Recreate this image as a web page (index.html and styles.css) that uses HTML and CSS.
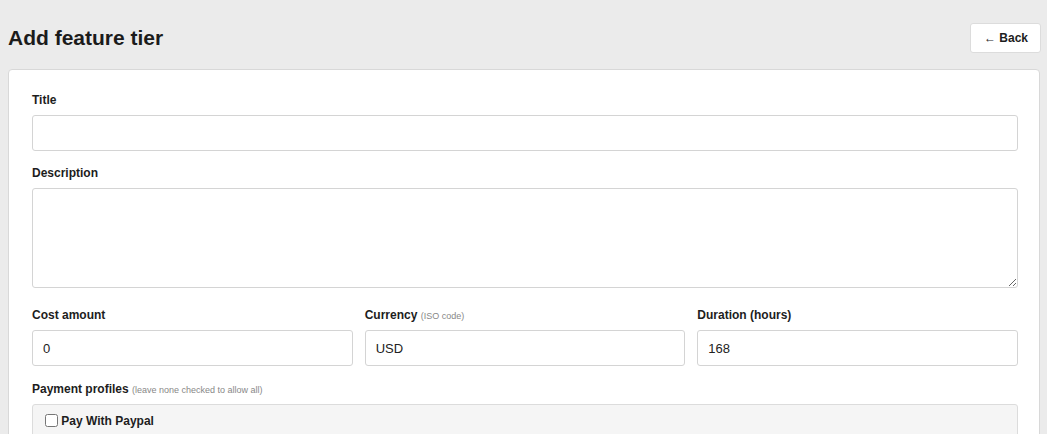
FILE: index.html
```
<!DOCTYPE html>
<html lang="en">
<head>
    <meta charset="UTF-8">
    <meta name="viewport" content="width=device-width, initial-scale=1.0">
    <title>Add feature tier</title>
    <link rel="stylesheet" href="styles.css">
</head>
<body>
    <div class="page-head">
        <h1>Add feature tier</h1>
        <button class="back">&larr; Back</button>
    </div>

    <form class="card">
        <div class="field">
            <label for="title">Title</label>
            <input type="text" id="title">
        </div>

        <div class="field">
            <label for="description">Description</label>
            <textarea id="description"></textarea>
        </div>

        <div class="row">
            <div class="field">
                <label for="cost">Cost amount</label>
                <input type="text" id="cost" value="0">
            </div>
            <div class="field">
                <label for="currency">Currency <small>(ISO code)</small></label>
                <input type="text" id="currency" value="USD">
            </div>
            <div class="field">
                <label for="duration">Duration (hours)</label>
                <input type="text" id="duration" value="168">
            </div>
        </div>

        <div class="field">
            <label>Payment profiles <small>(leave none checked to allow all)</small></label>
            <div class="profiles">
                <label class="profile"><input type="checkbox"> Pay With Paypal</label>
            </div>
        </div>
    </form>
</body>
</html>
```

FILE: styles.css
```
body {
    font-family: "Liberation Sans", Arial, sans-serif;
    margin: 0;
    padding: 23px 7px 0 8px;
    background-color: #ebebeb;
    color: #1d1d1d;
}
.page-head {
    display: flex;
    align-items: center;
    justify-content: space-between;
    height: 30px;
    margin-bottom: 16px;
}
h1 {
    margin: 0;
    font-size: 21px;
    color: #1b1b1b;
}
.back {
    height: 30px;
    margin-right: -1px;
    padding: 0 12px 0 13px;
    border: 1px solid #dcdcdc;
    border-radius: 3px;
    background-color: #fff;
    font-family: inherit;
    font-size: 12px;
    font-weight: bold;
    color: #1d1d1d;
    cursor: pointer;
}
.card {
    display: block;
    padding: 23px 21px 30px 23px;
    border: 1px solid #d8d8d8;
    border-radius: 4px;
    background-color: #fff;
}
.field {
    margin-bottom: 15px;
}
.field > label {
    display: block;
    margin-bottom: 8px;
    font-size: 12px;
    line-height: 14px;
    font-weight: bold;
}
small {
    font-size: 9px;
    line-height: 1;
    font-weight: normal;
    color: #888;
}
input[type="text"],
textarea {
    display: block;
    box-sizing: border-box;
    width: 100%;
    padding: 0 10px;
    border: 1px solid #d4d4d4;
    border-radius: 3px;
    font-family: inherit;
    font-size: 13px;
    color: #222;
}
input[type="text"] {
    height: 36px;
}
textarea {
    height: 100px;
    padding: 8px 10px;
    margin-bottom: 20px;
}
.row {
    display: grid;
    grid-template-columns: 1fr 1fr 1fr;
    column-gap: 12px;
    margin-top: 1px;
}
.row .field {
    margin-bottom: 16px;
}
.profiles {
    padding: 6px 8px 20px;
    border: 1px solid #dcdcdc;
    border-radius: 3px;
    background-color: #f5f5f5;
}
.profile {
    font-size: 12px;
    font-weight: bold;
}
.profile input {
    margin: 3px 0 3px 4px;
    vertical-align: -2px;
}
```
